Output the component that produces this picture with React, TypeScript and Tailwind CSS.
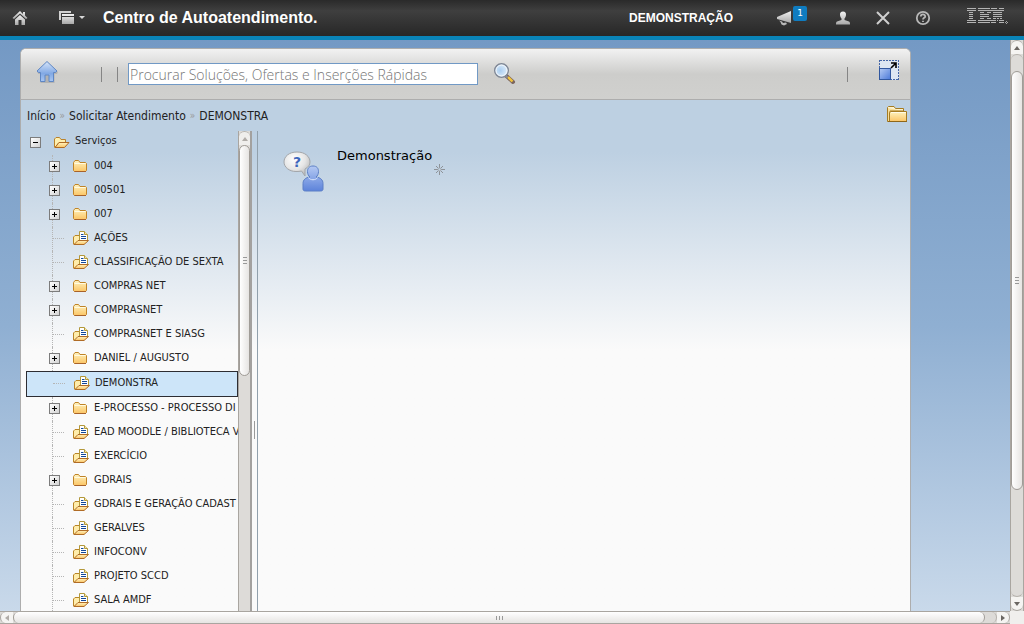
import { useState } from "react"
import clsx from "clsx"

interface TreeNode {
  label: string
  expandable?: boolean
}

const services: TreeNode[] = [
  { label: "004", expandable: true },
  { label: "00501", expandable: true },
  { label: "007", expandable: true },
  { label: "AÇÕES" },
  { label: "CLASSIFICAÇÃO DE SEXTA" },
  { label: "COMPRAS NET", expandable: true },
  { label: "COMPRASNET", expandable: true },
  { label: "COMPRASNET E SIASG" },
  { label: "DANIEL / AUGUSTO", expandable: true },
  { label: "DEMONSTRA" },
  { label: "E-PROCESSO - PROCESSO DI", expandable: true },
  { label: "EAD MOODLE / BIBLIOTECA V" },
  { label: "EXERCÍCIO" },
  { label: "GDRAIS", expandable: true },
  { label: "GDRAIS E GERAÇÃO CADAST" },
  { label: "GERALVES" },
  { label: "INFOCONV" },
  { label: "PROJETO SCCD" },
  { label: "SALA AMDF" },
]

// [x, row, width] of every stripe segment, rows are two pixels apart
const ibmStripes = [
  [0, 0, 9], [11, 0, 12], [24, 0, 6], [32, 0, 5],
  [0, 1, 9], [11, 1, 14], [24, 1, 7], [31, 1, 6],
  [2, 2, 4], [13, 2, 4], [20, 2, 4], [26, 2, 5], [31, 2, 4],
  [2, 3, 4], [13, 3, 9], [26, 3, 9],
  [2, 4, 4], [13, 4, 9], [26, 4, 3], [29, 4, 3], [32, 4, 3],
  [2, 5, 4], [13, 5, 4], [20, 5, 4], [26, 5, 3], [30, 5, 2], [33, 5, 2],
  [0, 6, 9], [11, 6, 13], [24, 6, 5], [30, 6, 1], [32, 6, 5],
  [0, 7, 9], [11, 7, 12], [24, 7, 5], [32, 7, 5],
]

function Gradients() {
  return (
    <svg width="0" height="0" className="absolute" aria-hidden="true">
      <defs>
        <linearGradient id="silver" x1="0" y1="0" x2="0" y2="1">
          <stop offset="0" stopColor="#f2f2f2" />
          <stop offset="1" stopColor="#a8a8a8" />
        </linearGradient>
        <linearGradient id="blue" x1="0" y1="0" x2="0" y2="1">
          <stop offset="0" stopColor="#d5e4f9" />
          <stop offset="0.6" stopColor="#82a9e4" />
          <stop offset="1" stopColor="#a9c7f3" />
        </linearGradient>
        <linearGradient id="person" x1="0" y1="0" x2="0" y2="1">
          <stop offset="0" stopColor="#b4c9f3" />
          <stop offset="1" stopColor="#5d83da" />
        </linearGradient>
        <linearGradient id="square" x1="0" y1="0" x2="1" y2="1">
          <stop offset="0" stopColor="#b5cbf4" />
          <stop offset="1" stopColor="#4a78d8" />
        </linearGradient>
        <linearGradient id="yellow" x1="0" y1="0" x2="0" y2="1">
          <stop offset="0" stopColor="#fff3c0" />
          <stop offset="1" stopColor="#fbc565" />
        </linearGradient>
        <radialGradient id="bubble" cx="0.4" cy="0.3" r="0.7">
          <stop offset="0" stopColor="#ffffff" />
          <stop offset="0.6" stopColor="#e6e6e6" />
          <stop offset="1" stopColor="#bdbdbd" />
        </radialGradient>
        <radialGradient id="lens" cx="0.4" cy="0.5" r="0.6">
          <stop offset="0" stopColor="#a9cdf0" />
          <stop offset="1" stopColor="#e4f0fb" />
        </radialGradient>
      </defs>
    </svg>
  )
}

function FolderIcon() {
  return (
    <svg width="16" height="14" viewBox="0 0 16 14" className="shrink-0">
      <path d="M0.500 11.500V3.500L2 1.500H5.500L7 3.500H12.500L13.500 4.500V11.500L12.500 12.500H1.500Z" fill="url(#yellow)" stroke="#c08428" />
      <path d="M1.500 4.500H12.500" stroke="#fffbe2" />
      <path d="M1.500 12.500H13" stroke="#a8622a" />
    </svg>
  )
}

function OpenFolderIcon() {
  return (
    <svg width="16" height="14" viewBox="0 0 16 14" className="shrink-0">
      <path d="M0.500 12V4L2 2.500H5.500L7 4.500H11.500V7.500H5L1 12.500Z" fill="#fff0b0" stroke="#b9822c" />
      <path d="M1 12.500L5 7.500H15L10.500 12.500Z" fill="url(#yellow)" stroke="#b06c26" />
    </svg>
  )
}

function DocumentFolderIcon() {
  return (
    <svg width="16" height="16" viewBox="0 0 16 16" className="shrink-0">
      <path d="M0.500 14V7L2 5.500H7V12L1 14.500Z" fill="#ffedab" stroke="#b98528" />
      <path d="M6.500 11V1.500H11L14.500 4.500V11Z" fill="#ffffff" stroke="#b3983a" />
      <path d="M11.500 1.500V4.500H14.500" fill="#f4e6a8" stroke="#b3983a" />
      <path d="M8 4.500H10.500M8 6.500H13M8 8.500H13" stroke="#12489a" />
      <path d="M1 14.500L5 10.500H15.500L11 14.500Z" fill="url(#yellow)" stroke="#b06c26" />
    </svg>
  )
}

function Expander({ open, label }: { open: boolean; label: string }) {
  return (
    <button
      type="button"
      aria-label={(open ? "Recolher " : "Expandir ") + label}
      className="relative size-[11px] shrink-0 border border-[#7c7c7c] bg-linear-to-br from-white to-[#d2d2d2]"
    >
      <svg width="9" height="9" viewBox="0 0 9 9" shapeRendering="crispEdges">
        <path d={open ? "M2 4.500H7" : "M2 4.500H7M4.500 2V7"} stroke="#000" />
      </svg>
    </button>
  )
}

function TreeItem({ node, selected, onSelect }: { node: TreeNode; selected: boolean; onSelect: () => void }) {
  return (
    <li
      className={clsx(
        "flex items-center overflow-hidden",
        selected ? "h-[26px] border border-[#2d2d33] bg-[#cde5f9]" : "h-6"
      )}
    >
      <span className="flex w-[47px] shrink-0 items-center self-stretch pl-[23px]">
        {node.expandable ? (
          <span className="relative flex h-full items-center pb-0.5">
            <span className="absolute inset-y-0 left-[3px] border-l border-dotted border-[#b5b5b5]" />
            <Expander open={false} label={node.label} />
          </span>
        ) : (
          <span className={clsx("ml-[3px] flex h-full w-3 items-center pb-0.5", !selected && "border-l border-dotted border-[#b5b5b5]")}>
            <span className="w-full border-t border-dotted border-[#b5b5b5]" />
          </span>
        )}
      </span>
      <a
        href="#"
        onClick={(e) => {
          e.preventDefault()
          onSelect()
        }}
        className="flex items-center gap-[5px] pb-[3px] whitespace-nowrap"
      >
        {node.expandable ? <FolderIcon /> : <DocumentFolderIcon />}
        <span>{node.label}</span>
      </a>
    </li>
  )
}

function TopBar() {
  return (
    <header className="flex h-10 shrink-0 items-center border-b-4 border-[#0a84b8] bg-linear-to-b from-[#2a2a2a] via-[#3f3f3f] via-30% to-[#272727] pr-[15px] pl-3 text-white">
      <button type="button" aria-label="Início">
        <svg width="16" height="16" viewBox="0 0 16 16">
          <path d="M8 1L0.500 8L2 9L8 3.500L14 9L15.500 8L13 5.500V2H11V4Z" fill="url(#silver)" />
          <path d="M3 9.500L8 5L13 9.500V15H9.500V10H6.500V15H3Z" fill="url(#silver)" />
        </svg>
      </button>
      <button type="button" aria-label="Ir para" className="ml-[30px] flex items-center gap-1">
        <svg width="17" height="16" viewBox="0 0 17 16" shapeRendering="crispEdges">
          <path d="M1 1H13V3H3V10H1Z" fill="#d2d2d2" />
          <path d="M4 4H16V6H4ZM4 7H16V14H4Z" fill="url(#silver)" />
        </svg>
        <svg width="6" height="4" viewBox="0 0 6 4">
          <path d="M0 0H6L3 3Z" fill="#d8d8d8" />
        </svg>
      </button>
      <h1 className="ml-[18px] font-['Liberation_Sans',Arial,sans-serif] text-[16px] leading-5 font-bold">
        Centro de Autoatendimento.
      </h1>
      <div className="ml-auto flex items-center">
        <span className="font-['Liberation_Sans',Arial,sans-serif] text-[12px] font-bold">DEMONSTRAÇÃO</span>
        <button type="button" aria-label="Avisos" className="relative ml-11">
          <svg width="16" height="16" viewBox="0 0 16 16">
            <path d="M0 7L14 1V13L0 9Z" fill="url(#silver)" />
            <path d="M2 10.500L5 11.500L6 13L9 12.500L10 14L7 15.500L4.500 14.500L3.500 12Z" fill="#b8b8b8" />
          </svg>
          <span className="absolute -top-1 left-4 flex h-[15px] w-[14px] items-center justify-center rounded-[2px] bg-[#0f7cc0] font-['DejaVu_Sans',sans-serif] text-[9px] leading-none">
            1
          </span>
        </button>
        <button type="button" aria-label="Perfil" className="ml-[42px]">
          <svg width="16" height="16" viewBox="0 0 16 16">
            <path d="M8 1.500C5.800 1.500 4.800 3 5 5C5.200 7 6 7.800 6.500 8.500V10L2 11.500C1 12 1 13 1 14.500H15C15 13 15 12 14 11.500L9.500 10V8.500C10 7.800 10.800 7 11 5C11.200 3 10.200 1.500 8 1.500Z" fill="url(#silver)" />
          </svg>
        </button>
        <button type="button" aria-label="Sair" className="ml-6">
          <svg width="16" height="16" viewBox="0 0 16 16">
            <path d="M2 2L14 14M14 2L2 14" stroke="#cfcfcf" strokeWidth="2" />
          </svg>
        </button>
        <button type="button" aria-label="Ajuda" className="ml-6">
          <svg width="16" height="16" viewBox="0 0 16 16" fill="none" stroke="#b8b8b8" strokeWidth="1.800">
            <circle cx="8" cy="8" r="6.200" />
            <path d="M5.800 6.500C5.800 3.800 10.200 3.800 10.200 6.400C10.200 7.900 8 7.800 8 9.500M8 10.700V12" />
          </svg>
        </button>
        <svg width="42" height="18" viewBox="0 0 42 18" className="mb-1 ml-9" role="img" aria-label="IBM" shapeRendering="crispEdges">
          {ibmStripes.map(([x, row, w]) => (
            <rect key={`${x}-${row}`} x={x} y={1 + row * 2} width={w} height="1" fill="#b4b4b4" />
          ))}
          <path d="M39 14H40V15H39ZM38 15H39V16H38ZM40 15H41V16H40ZM39 16H40V17H39Z" fill="#a4a4a4" />
        </svg>
      </div>
    </header>
  )
}

function Separator() {
  return <span className="h-[15px] w-px bg-[#858585]" />
}

function Toolbar() {
  return (
    <div className="flex h-[51px] shrink-0 items-center border-b border-[#adadad] bg-linear-to-b from-[#f2f2f2] via-[#cdcdcb] via-50% to-[#d0d0ce] pr-2.5 pl-3.5">
      <button type="button" aria-label="Página inicial" className="-mt-1">
        <svg width="24" height="24" viewBox="0 0 24 24">
          <path d="M12 2L2 12L3.500 14H5.500V23H19.500V14H22L23 12Z" fill="#8c8c8c" opacity="0.400" />
          <path d="M12 1.500L2 11L3.500 12.500H5.500V21.500H10V15H14V21.500H18.500V12.500H20.500L22 11L12 1.500Z" fill="url(#blue)" stroke="#5f87c4" />
        </svg>
      </button>
      <div className="ml-[42px] flex items-center gap-[15px]">
        <Separator />
        <Separator />
      </div>
      <input
        type="search"
        aria-label="Procurar"
        placeholder="Procurar Soluções, Ofertas e Inserções Rápidas"
        className="ml-2.5 h-[22px] w-[350px] border border-[#7199c5] bg-white px-px font-['Open_Sans',sans-serif] text-[14px] font-light text-[#444] placeholder:text-[#757575]"
      />
      <button type="button" aria-label="Pesquisar" className="-mt-0.5 ml-3.5">
        <svg width="24" height="24" viewBox="0 0 24 24">
          <path d="M14.500 15L21 21" stroke="#7b6560" strokeWidth="4" strokeLinecap="round" />
          <path d="M16 16L20.500 20.500" stroke="#f2c43a" strokeWidth="2.400" />
          <path d="M13 14L15.500 16.500" stroke="#8a8a94" strokeWidth="2" />
          <circle cx="9.500" cy="9.500" r="6.800" fill="url(#lens)" stroke="#7f8795" strokeWidth="1.500" />
          <circle cx="9.500" cy="9.500" r="5.500" fill="none" stroke="#f4f8fc" />
        </svg>
      </button>
      <div className="ml-auto flex items-center gap-[30px]">
        <Separator />
        <button type="button" aria-label="Maximizar" className="-mt-2">
          <svg width="22" height="22" viewBox="0 0 22 22">
            <rect x="1.500" y="1.500" width="19" height="19" fill="#dde6f2" stroke="#4466a8" strokeDasharray="2 1" shapeRendering="crispEdges" />
            <rect x="1.500" y="9.500" width="11" height="11" fill="url(#square)" stroke="#31579f" shapeRendering="crispEdges" />
            <path d="M13 4H18V9M18 4L13 9" fill="none" stroke="#000" strokeWidth="1.600" />
          </svg>
        </button>
      </div>
    </div>
  )
}

function Breadcrumb() {
  return (
    <div className="flex h-[31px] shrink-0 items-center justify-between pr-0.5 pl-1.5">
      <nav aria-label="Trilha" className="flex items-center text-[12px] leading-4 text-[#222]">
        <a href="#">Início</a>
        <span className="mx-1 text-[10px] text-[#999]">»</span>
        <a href="#">Solicitar Atendimento</a>
        <span className="mx-1 text-[10px] text-[#999]">»</span>
        <span>DEMONSTRA</span>
      </nav>
      <button type="button" aria-label="Pasta" className="-mt-1">
        <svg width="22" height="18" viewBox="0 0 22 18">
          <path d="M1.500 16V2.500L2.500 1.500H8L9.500 3.500H17.500V7" fill="#fdf3cf" stroke="#a57b22" />
          <path d="M1.500 3V16.500H4V6H17" fill="#f8dd98" stroke="#a57b22" />
          <path d="M3.500 16.500V7.500L5 6.500H20.500V16.500Z" fill="url(#yellow)" stroke="#a57b22" />
          <path d="M5 7.500H20" stroke="#fffbe8" />
          <path d="M2 16.500H21" stroke="#8f6618" />
        </svg>
      </button>
    </div>
  )
}

function ScrollArrow({ direction, muted }: { direction: "up" | "down" | "left" | "right"; muted?: boolean }) {
  const paths = {
    up: "M0 5L3 1L6 5Z",
    down: "M0 1L3 5L6 1Z",
    left: "M5 0L1 3L5 6Z",
    right: "M1 0L5 3L1 6Z",
  }
  return (
    <svg width="6" height="6" viewBox="0 0 6 6">
      <path d={paths[direction]} fill={muted ? "#b0aca8" : "#6b6763"} />
    </svg>
  )
}

function VerticalScrollbar() {
  return (
    <div aria-hidden="true" className="flex w-[14px] shrink-0 flex-col border-x border-[#a9a5a0] bg-[#dddbd8]">
      <div className="flex h-[14px] items-center justify-center rounded-t-full border-t border-[#a9a5a0] bg-[#f5f4f2]">
        <ScrollArrow direction="up" />
      </div>
      <div className="h-[17px] rounded-t-full border-t border-[#b5b1ac]" />
      <div className="flex grow-[27] flex-col items-center justify-center gap-0.5 rounded-full border border-[#a09c97] bg-linear-to-r from-white to-[#e6e4e2]">
        <span className="h-px w-1 bg-[#999]" />
        <span className="h-px w-1 bg-[#999]" />
        <span className="h-px w-1 bg-[#999]" />
      </div>
      <div className="grow-[7] rounded-b-full border-b border-[#b5b1ac]" />
      <div className="flex h-[14px] items-center justify-center rounded-b-full border-b border-[#a9a5a0] bg-[#f5f4f2]">
        <ScrollArrow direction="down" />
      </div>
    </div>
  )
}

function HorizontalScrollbar() {
  return (
    <div aria-hidden="true" className="mr-[14px] flex h-[13px] shrink-0 border-y border-[#a9a5a0] bg-[#dddbd8]">
      <div className="flex w-[13px] items-center justify-center rounded-l-full border-l border-[#a9a5a0] bg-[#f5f4f2]">
        <ScrollArrow direction="left" muted />
      </div>
      <div className="flex grow items-center justify-center gap-0.5 rounded-full border-x border-[#a09c97] bg-linear-to-b from-white to-[#e6e4e2]">
        <span className="h-1 w-px bg-[#999]" />
        <span className="h-1 w-px bg-[#999]" />
        <span className="h-1 w-px bg-[#999]" />
      </div>
      <div className="w-3 rounded-r-full border-r border-[#b5b1ac]" />
      <div className="flex w-[13px] items-center justify-center rounded-r-full border-r border-[#a9a5a0] bg-[#f5f4f2]">
        <ScrollArrow direction="right" />
      </div>
    </div>
  )
}

function ServiceTree() {
  const [selected, setSelected] = useState("DEMONSTRA")

  return (
    <aside className="flex w-[231px] shrink-0 pl-[5px]">
      <nav aria-label="Serviços" className="min-w-0 flex-1 overflow-hidden text-[11px] leading-4 text-[#222]">
        <div className="flex h-6 items-center pb-0.5 pl-1">
          <Expander open label="Serviços" />
          <a href="#" className="ml-[13px] flex items-center gap-[5px]">
            <OpenFolderIcon />
            <span className="-mt-0.5">Serviços</span>
          </a>
        </div>
        <ul>
          {services.map((node) => (
            <TreeItem
              key={node.label}
              node={node}
              selected={selected === node.label}
              onSelect={() => setSelected(node.label)}
            />
          ))}
        </ul>
      </nav>
      <div aria-hidden="true" className="flex w-[14px] shrink-0 flex-col border-r-2 border-l border-r-[#a3a19f] border-l-[#a9a5a0] bg-[#dddbd8]">
        <div className="flex h-[14px] items-center justify-center rounded-t-full border-t border-[#b5b1ac] bg-[#efeeec]">
          <ScrollArrow direction="up" muted />
        </div>
        <div className="flex h-[231px] flex-col items-center justify-center gap-0.5 rounded-full border border-[#a09c97] bg-linear-to-r from-white to-[#e6e4e2]">
          <span className="h-px w-1 bg-[#999]" />
          <span className="h-px w-1 bg-[#999]" />
          <span className="h-px w-1 bg-[#999]" />
        </div>
      </div>
    </aside>
  )
}

function ServiceCard() {
  return (
    <a href="#" className="flex items-start">
      <svg width="44" height="46" viewBox="0 0 44 46">
        <path d="M14 4C6 4 1 8.500 1 14C1 19 6 23.500 13 23.500C15 23.500 17 23.500 18.500 23L22 28V21C25.500 19 27 17 27 14C27 8.500 22 4 14 4Z" fill="url(#bubble)" stroke="#a3a6aa" />
        <text x="14" y="19" textAnchor="middle" fill="#3f68bd" className="font-['DejaVu_Sans',sans-serif] text-[14px] font-bold">?</text>
        <path d="M30 18C26 18 24.500 20.500 24.500 23.500C24.500 26 25.500 28 27 29C22.500 29.500 20 32 20 35.500V41C20 42.500 21 43 22.500 43H37.500C39 43 40 42.500 40 41V35.500C40 32 37.500 29.500 33 29C34.500 28 35.500 26 35.500 23.500C35.500 20.500 34 18 30 18Z" fill="url(#person)" stroke="#5c7fc6" />
        <path d="M25.500 29.500C27 32.500 33 32.500 34.500 29.500" fill="none" stroke="#dce7fb" />
      </svg>
      <span className="ml-2.5 text-[13px] leading-4 text-black font-['DejaVu_Sans',sans-serif]">Demonstração</span>
      <svg width="11" height="11" viewBox="0 0 11 11" className="mt-4 ml-0.5">
        <path d="M5.500 0V4M5.500 7V11M0 5.500H4M7 5.500H11M2 2L4 4M7 7L9 9M9 2L7 4M4 7L2 9" stroke="#8d9298" />
        <circle cx="5.500" cy="5.500" r="1.500" fill="none" stroke="#a0a4aa" />
      </svg>
    </a>
  )
}

export default function App() {
  return (
    <div className="flex h-screen flex-col overflow-hidden bg-[#f0efed] font-['DejaVu_Sans_Condensed','DejaVu_Sans',sans-serif]">
      <Gradients />
      <TopBar />
      <div className="flex min-h-0 flex-1">
        <div className="flex min-w-0 flex-1 flex-col bg-linear-to-b from-[#7499c4] via-[#8fafd2] via-50% to-[#c9d9ea] pt-2 pr-[99px] pl-5">
          <main className="flex min-h-0 flex-1 flex-col overflow-hidden rounded-t-md border border-b-0 border-[#adadad] bg-[#fafafa]">
            <Toolbar />
            <div className="flex min-h-0 flex-1 flex-col bg-linear-to-b from-[#bdd0e2] from-[52px] to-[#fafafa] to-[250px]">
              <Breadcrumb />
              <div className="flex min-h-0 flex-1">
                <ServiceTree />
                <div className="flex w-[6px] shrink-0 items-center border-r border-[#91a0ac]">
                  <span className="mt-[117px] ml-0.5 h-[18px] w-px bg-[#999]" />
                </div>
                <section className="flex-1 pt-[17px] pl-[25px]">
                  <ServiceCard />
                </section>
              </div>
            </div>
          </main>
        </div>
        <VerticalScrollbar />
      </div>
      <HorizontalScrollbar />
    </div>
  )
}
